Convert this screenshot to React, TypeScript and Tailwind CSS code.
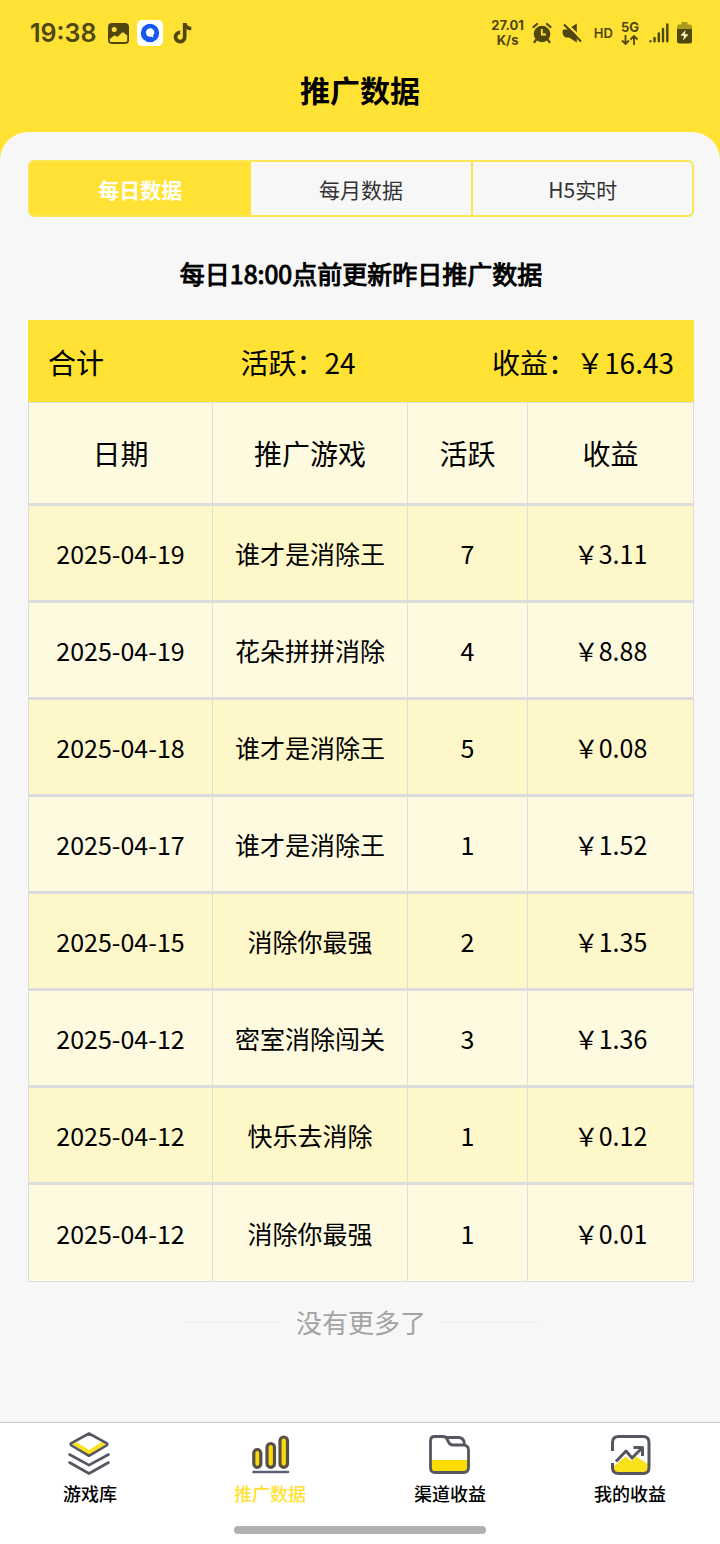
import { useState } from "react";

const tabs = ["每日数据", "每月数据", "H5实时"];

const rows = [
  { date: "2025-04-19", game: "谁才是消除王", active: 7, income: "3.11" },
  { date: "2025-04-19", game: "花朵拼拼消除", active: 4, income: "8.88" },
  { date: "2025-04-18", game: "谁才是消除王", active: 5, income: "0.08" },
  { date: "2025-04-17", game: "谁才是消除王", active: 1, income: "1.52" },
  { date: "2025-04-15", game: "消除你最强", active: 2, income: "1.35" },
  { date: "2025-04-12", game: "密室消除闯关", active: 3, income: "1.36" },
  { date: "2025-04-12", game: "快乐去消除", active: 1, income: "0.12" },
  { date: "2025-04-12", game: "消除你最强", active: 1, income: "0.01" },
];

const navItems = [
  { label: "游戏库", href: "#games", icon: LayersIcon },
  { label: "推广数据", href: "#promotion", icon: BarsIcon },
  { label: "渠道收益", href: "#channel", icon: FolderIcon },
  { label: "我的收益", href: "#income", icon: TrendIcon },
];

function LayersIcon() {
  return (
    <svg width="44" height="44" viewBox="0 0 44 44" fill="none" stroke="#55565f" strokeWidth="2.6" strokeLinecap="round" strokeLinejoin="round">
      <path d="M4 13 21 24.5 38 13 34 11 21 19 8 11Z" fill="#fbe31c" stroke="none" />
      <path d="M21 2.5 38.5 12.2Q40.2 13.3 38.5 14.5L21 24.8 3.5 14.5Q1.8 13.3 3.5 12.2Z" />
      <path d="M1.5 23.5 21 34.2 40.5 23.5" />
      <path d="M1.5 31.5 21 42.5 40.5 31.5" />
    </svg>
  );
}

function BarsIcon() {
  return (
    <svg width="44" height="44" viewBox="0 0 44 44" fill="#f9d90c" stroke="#55514a" strokeWidth="3.2">
      <rect x="5.8" y="18.5" width="7" height="17.8" rx="3.5" />
      <rect x="19" y="12.5" width="7.5" height="23.8" rx="3.7" />
      <rect x="32" y="6" width="7.5" height="30.3" rx="3.7" />
      <path d="M5.5 41H40" stroke="#596173" strokeWidth="2.6" strokeLinecap="round" />
    </svg>
  );
}

function FolderIcon() {
  return (
    <svg width="44" height="44" viewBox="0 0 44 44" fill="none" stroke="#55565f" strokeWidth="2.8" strokeLinejoin="round">
      <path d="M3 29H40V37Q40 41 36 41H6Q3 41 3 37Z" fill="#fbdc05" stroke="none" />
      <path d="M6.5 5.500H15Q18 5.500 19 8L20.500 11Q22 14 25 14H35.500Q40.500 14.500 40.500 19V36.500Q40.500 41.500 35.500 41.500H7Q2.500 41.500 2.500 37V10Q2.500 5.500 6.500 5.500Z" />
      <path d="M17 6.500H31Q36.500 7 36.500 14" />
    </svg>
  );
}

function TrendIcon() {
  return (
    <svg width="44" height="44" viewBox="0 0 44 44" fill="none" stroke="#55565f" strokeWidth="3" strokeLinejoin="round">
      <path d="M5 36 17.500 25.500 23 30 28 25.500 40 33V38Q40 41 36 41H9Q5 41 5 37Z" fill="#f9e219" stroke="none" />
      <path d="M4.500 20V11.500Q4.500 5.500 10.500 5.500H35Q41 5.500 41 11.500V36.500Q41 42.500 35 42.500H10.500Q4.500 42.500 4.500 36.500V32" />
      <path d="M8 30.500 18 20 24 27 34.500 16.500" />
      <path d="M25.500 16.500H34.500V25" />
    </svg>
  );
}

function StatusBar() {
  return (
    <div className="flex h-16 items-center justify-between pt-0.5 pr-7 pl-[30px] text-[#4f4610]">
      <div className="flex items-center">
        <span className="font-['Inter',sans-serif] text-[25px] leading-8 font-semibold">19:38</span>
        <svg className="ml-3" width="21" height="21" viewBox="0 0 21 21" fill="currentColor">
          <path fillRule="evenodd" d="M4 0H17Q21 0 21 4V17Q21 21 17 21H4Q0 21 0 17V4Q0 0 4 0ZM6.200 4A2.500 2.500 0 1 0 6.200 9 2.500 2.500 0 1 0 6.200 4ZM1.800 16V17.500Q1.800 19 3.500 19H17.500Q19.200 19 19.200 17.500V12.500L15.500 9.500Q14.500 9 13.500 10L9.500 14 7.500 12.800Q6.500 12.300 5.500 13Z" />
        </svg>
        <svg className="ml-2" width="26" height="26" viewBox="0 0 26 26">
          <rect width="26" height="26" rx="5" fill="#fff" />
          <circle cx="13" cy="13" r="9.2" fill="#1557f0" />
          <path d="M9 12.500A4.200 4.200 0 0 1 17.400 12.500Q17.400 14 16 15.200L16.500 17.500 14 16.700Q9 17 9 12.500Z" fill="#fff" />
        </svg>
        <svg className="ml-2.5" width="20" height="22" viewBox="0 0 20 22" fill="none" stroke="currentColor">
          <path d="M11.700 1V14.500A4.600 4.600 0 1 1 7.200 10.400" strokeWidth="3.7" />
          <path d="M11.700 1.500Q13 6.500 18.300 6.500" strokeWidth="3.5" />
        </svg>
      </div>
      <div className="flex items-center">
        <div className="text-center font-['Inter',sans-serif] text-[13px] leading-[15px] font-bold">
          <div>27.01</div>
          <div>K/s</div>
        </div>
        <svg className="ml-2" width="20" height="22" viewBox="0 0 20 22">
          <g stroke="currentColor" strokeWidth="2.2" strokeLinecap="round" fill="none">
            <path d="M1.500 5 5 2M18.500 5 15 2M4 18 2.500 20M16 18 17.500 20" />
          </g>
          <circle cx="10" cy="12" r="8.3" fill="currentColor" />
          <path d="M9.800 7V12.500H14" stroke="#ffe233" strokeWidth="1.8" fill="none" />
        </svg>
        <svg className="ml-2.5" width="20" height="20" viewBox="0 0 20 20">
          <path d="M1.500 6.500H5.500L14.800 .5V19.500L7 14.500L3.500 14.500 1 12Q0 7 1.500 6.500Z" fill="currentColor" />
          <path d="M4 .5 19.500 15.500" stroke="#ffe233" strokeWidth="2.4" />
          <path d="M2 1.500 19 18.500" stroke="currentColor" strokeWidth="2.2" />
        </svg>
        <span className="ml-3 font-['Inter',sans-serif] text-[13px] leading-4 font-semibold">HD</span>
        <div className="ml-2 flex flex-col items-center">
          <span className="font-['Inter',sans-serif] text-[13px] leading-[14px] font-bold">5G</span>
          <svg width="18" height="12" viewBox="0 0 18 12" fill="none" stroke="currentColor" strokeWidth="1.8">
            <path d="M4.500 1V10M1 6.500 4.500 10 8 6.500M13 11V2M9.500 5.500 13 2 16.500 5.500" />
          </svg>
        </div>
        <svg className="ml-2.5" width="20" height="20" viewBox="0 0 20 20" stroke="currentColor" strokeWidth="2.4" strokeLinecap="round">
          <path d="M1.500 18.200V18.300M5.500 15V18.300M9.800 10.500V18.300M14 6V18.300M18.300 1.500V18.300" />
        </svg>
        <svg className="ml-2" width="15" height="22" viewBox="0 0 15 22">
          <path d="M4.500 0H10.500V2.500H13Q15 2.500 15 4.500V8H0V4.500Q0 2.500 2 2.500H4.500Z" fill="#aa9a1c" />
          <path d="M0 7H15V19Q15 21.500 12.500 21.500H2.500Q0 21.500 0 19Z" fill="currentColor" />
          <path d="M8.500 8 3.500 13.500 7 14 6 18.500 11.500 12.500 8 12Z" fill="#fff7c0" />
        </svg>
      </div>
    </div>
  );
}

export default function App() {
  const [tab, setTab] = useState(0);
  const [page, setPage] = useState(1);

  return (
    <div className="flex min-h-screen flex-col bg-[#ffe233] font-['Noto_Sans_CJK_SC',sans-serif] text-black">
      <StatusBar />
      <header className="flex h-[68px] justify-center pt-1">
        <h1 className="text-[30px] leading-[42px] font-bold">推广数据</h1>
      </header>

      <main className="flex flex-1 flex-col rounded-t-[28px] bg-[#f7f7f7] pt-7 pr-[26px] pl-7">
        {/* Tabs */}
        <div role="tablist" className="grid h-[57px] grid-cols-3 overflow-hidden rounded-md border-2 border-[#fae553]">
          {tabs.map((label, i) => (
            <button
              key={label}
              type="button"
              role="tab"
              aria-selected={tab === i}
              onClick={() => setTab(i)}
              className={`border-[#fae553] text-[21px] leading-8 ${
                i > 0 && tab !== i - 1 ? "border-l-2" : ""
              } ${tab === i ? "bg-[#ffe233] font-bold text-white" : "text-[#333333]"}`}
            >
              {label}
            </button>
          ))}
        </div>

        <p className="mt-[38px] text-center text-[25px] leading-9 [-webkit-text-stroke:1px]">
          每日18:00点前更新昨日推广数据
        </p>

        {/* Totals */}
        <div className="mt-[29px] flex h-[82px] items-center justify-between bg-[#ffe233] px-5 pt-0.5 text-[28px] leading-10">
          <span>合计</span>
          <span>活跃：24</span>
          <span>收益：￥16.43</span>
        </div>

        <table className="w-full table-fixed border-separate border-spacing-0 border-t border-l border-[#dddddd] text-center">
          <colgroup>
            <col className="w-[184px]" />
            <col className="w-[195px]" />
            <col className="w-[120px]" />
            <col className="w-[166px]" />
          </colgroup>
          <thead>
            <tr className="h-[103px] bg-[#fefae0] text-[28px] leading-10">
              {["日期", "推广游戏", "活跃", "收益"].map((name) => (
                <th key={name} scope="col" className="border-r border-b-3 border-[#dddddd] p-0 font-normal">
                  {name}
                </th>
              ))}
            </tr>
          </thead>
          <tbody>
            {rows.map((row, i) => (
              <tr
                key={i}
                className="h-[97px] text-[25px] leading-9 odd:bg-[#fef7ca] even:bg-[#fefae0] *:border-r *:border-b-3 *:border-[#dddddd] *:p-0 last:*:border-b"
              >
                <td>{row.date}</td>
                <td>{row.game}</td>
                <td>{row.active}</td>
                <td>￥{row.income}</td>
              </tr>
            ))}
          </tbody>
        </table>

        <div className="mt-5 mb-20 flex items-center justify-center gap-4 text-[26px] leading-10 text-[#a3a3a3]">
          <span className="h-0.5 w-24 bg-[#f1f1f1]" />
          没有更多了
          <span className="h-0.5 w-24 bg-[#f1f1f1]" />
        </div>
      </main>

      {/* Bottom navigation */}
      <footer className="border-t border-[#c8c8c8] bg-white pb-2.5">
        <nav className="grid grid-cols-4 pt-2">
          {navItems.map((item, i) => {
            const Icon = item.icon;
            return (
              <a
                key={item.href}
                href={item.href}
                onClick={() => setPage(i)}
                className={`flex flex-col items-center gap-1 text-[18px] leading-7 font-medium ${
                  page === i ? "text-[#ffe233]" : "text-black"
                }`}
              >
                <Icon />
                {item.label}
              </a>
            );
          })}
        </nav>
        <div className="mx-auto mt-[19px] h-2 w-[252px] rounded-full bg-[#b0b0b0]" />
      </footer>
    </div>
  );
}
